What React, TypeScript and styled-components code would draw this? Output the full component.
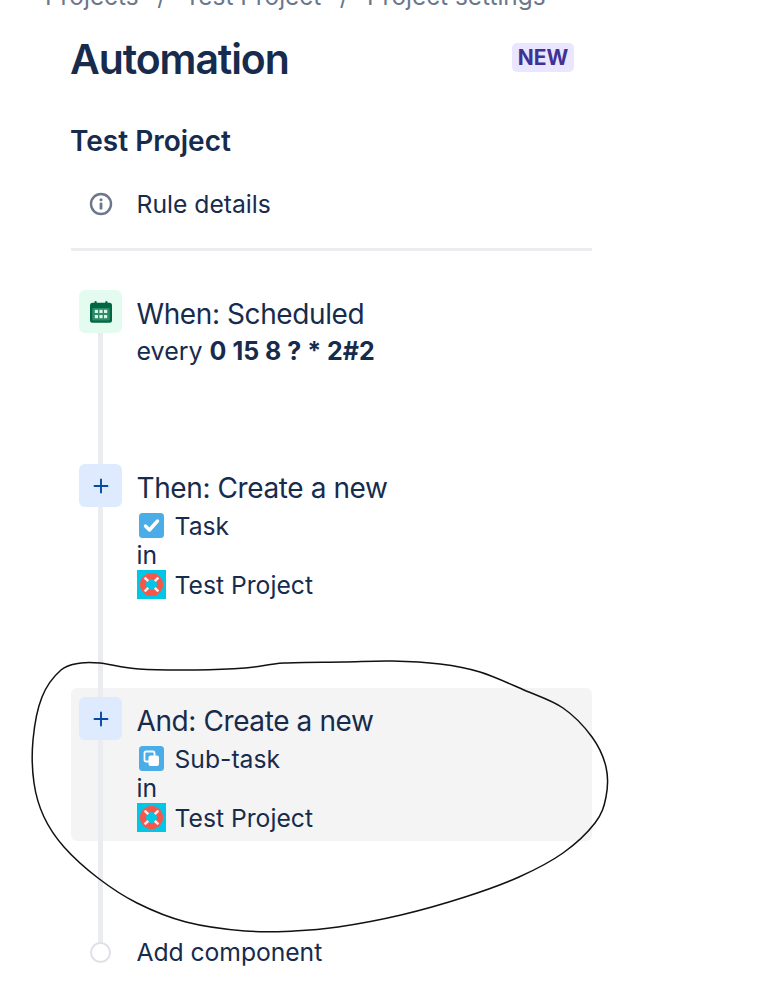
import React from "react";
import styled, { createGlobalStyle } from "styled-components";

const Global = createGlobalStyle`
  html, body { margin: 0; padding: 0; background: #fff; }
  body { font-family: Inter, "Liberation Sans", sans-serif; color: #172b4d; overflow: hidden; }
`;

const Page = styled.div`
  position: relative;
  width: 765px;
  height: 999px;
  overflow: hidden;
`;

const Breadcrumbs = styled.div`
  display: flex;
  gap: 18.5px;
  height: 8px;
  margin-left: 45px;
  font-size: 24.4px;
  line-height: 20px;
  white-space: nowrap;
  color: #6b778c;
  & > span { margin-top: -14px; display: block; }
`;

const Sidebar = styled.div`
  position: relative;
  width: 521px;
  margin-left: 71px;
`;

const Header = styled.div`
  display: flex;
  align-items: flex-start;
  justify-content: space-between;
  padding-top: 28px;
  padding-right: 18px;
`;

const Title = styled.h1`
  margin: 0 0 0 -1px;
  font-size: 41px;
  line-height: 46px;
  font-weight: 600;
  letter-spacing: -1.1px;
`;

const NewTag = styled.span`
  margin-top: 7px;
  width: 62px;
  height: 29px;
  border-radius: 5px;
  background: #eae6ff;
  color: #403294;
  font-size: 21px;
  line-height: 29px;
  font-weight: 700;
  text-align: center;
`;

const ProjectName = styled.h2`
  margin: 41px 0 0 -1px;
  font-size: 28px;
  line-height: 36px;
  font-weight: 600;
`;

const DetailsRow = styled.div`
  display: flex;
  align-items: center;
  gap: 23.5px;
  height: 30px;
  margin-top: 30px;
  padding-left: 18px;
  font-size: 24.7px;
`;

const Divider = styled.div`
  height: 3px;
  margin-top: 29px;
  background: #ebecf0;
`;

const Flow = styled.div`
  position: relative;
  margin-top: 39px;
`;

const Rail = styled.div`
  position: absolute;
  left: 27px;
  top: 20px;
  bottom: 12px;
  width: 5px;
  background: #ebecf0;
  z-index: 1;
`;

const Step = styled.div<{ $height: number }>`
  display: flex;
  gap: 14.5px;
  height: ${(p) => p.$height}px;
  padding-left: 8px;
  box-sizing: border-box;
`;

const ActiveStep = styled(Step)`
  padding-top: 9px;
  border-radius: 6px;
  background: #f4f4f4;
`;

const Badge = styled.div<{ $bg: string }>`
  position: relative;
  z-index: 2;
  display: flex;
  align-items: center;
  justify-content: center;
  flex: none;
  width: 43px;
  height: 43px;
  border-radius: 6px;
  background: ${(p) => p.$bg};
`;

const Body = styled.div`
  display: flex;
  flex-direction: column;
  padding-top: 6px;
`;

const StepTitle = styled.div`
  font-size: 28px;
  line-height: 36px;
  letter-spacing: -0.4px;
  white-space: nowrap;
`;

const StepLine = styled.div`
  display: flex;
  align-items: center;
  gap: 10.5px;
  height: 29.5px;
  font-size: 24.7px;
  white-space: nowrap;
`;

const Details = styled.div`
  margin-top: 5px;
`;

const Schedule = styled.div`
  margin-top: 3px;
  height: 32px;
  line-height: 32px;
  font-size: 25px;
  white-space: pre;
  b { font-weight: 700; }
`;

const AddRow = styled.div`
  display: flex;
  align-items: center;
  gap: 25.5px;
  height: 32px;
  margin-top: 95px;
  padding-left: 19px;
  font-size: 24.7px;
  letter-spacing: -0.05px;
`;

const Dot = styled.span`
  position: relative;
  z-index: 2;
  flex: none;
  box-sizing: border-box;
  width: 21px;
  height: 21px;
  border-radius: 50%;
  border: 2px solid #dfe1e6;
  background: #fff;
`;

const Scribble = styled.svg`
  position: absolute;
  left: 0;
  top: 0;
  z-index: 3;
  pointer-events: none;
`;

function InfoIcon() {
  return (
    <svg width="24" height="24" viewBox="0 0 24 24">
      <circle cx="12" cy="12" r="10" fill="none" stroke="#6b778c" strokeWidth="2.4" />
      <circle cx="12" cy="7.8" r="1.5" fill="#6b778c" />
      <rect x="10.6" y="10.6" width="2.8" height="7" rx="1.2" fill="#6b778c" />
    </svg>
  );
}

function CalendarIcon() {
  return (
    <svg width="24" height="24" viewBox="0 0 24 24">
      <rect x="5.5" y="1" width="2.2" height="5" rx="1.1" fill="#006644" />
      <rect x="16.3" y="1" width="2.2" height="5" rx="1.1" fill="#006644" />
      <rect x="1" y="2.8" width="22" height="20" rx="2.5" fill="#006644" />
      <rect x="3.2" y="8" width="17.6" height="12.6" rx="0.8" fill="#2f8a68" />
      {[5.8, 10.4, 15].map((x) =>
        [9.8, 15].map((y) => (
          <rect key={`${x}-${y}`} x={x} y={y} width="3.2" height="3.2" fill="#d6f5e6" />
        ))
      )}
    </svg>
  );
}

function PlusIcon() {
  return (
    <svg width="16" height="16" viewBox="0 0 16 16">
      <path d="M8 1.5v13M1.5 8h13" stroke="#0747a6" strokeWidth="1.9" strokeLinecap="round" />
    </svg>
  );
}

function TaskIcon() {
  return (
    <svg width="25" height="25" viewBox="0 0 25 25" style={{ marginLeft: 2.5 }}>
      <rect width="25" height="25" rx="3.5" fill="#4bade8" />
      <path d="M6.5 13l4 4 8-9" fill="none" stroke="#fff" strokeWidth="3.4" strokeLinecap="round" strokeLinejoin="round" />
    </svg>
  );
}

function SubtaskIcon() {
  return (
    <svg width="25" height="25" viewBox="0 0 25 25" style={{ marginLeft: 2.5 }}>
      <rect width="25" height="25" rx="3.5" fill="#4bade8" />
      <rect x="5.5" y="5.5" width="10" height="10" rx="1.5" fill="none" stroke="#fff" strokeWidth="1.8" />
      <rect x="9.5" y="9.5" width="10.5" height="10.5" rx="2" fill="#fff" />
    </svg>
  );
}

function ProjectIcon() {
  return (
    <svg width="29" height="29" viewBox="0 0 29 29" style={{ marginLeft: 0.5, marginRight: -2 }}>
      <rect width="29" height="29" fill="#00c7e6" />
      <circle cx="14.5" cy="14.5" r="8.5" fill="none" stroke="#f9564b" strokeWidth="6" />
      <path d="M7.6 7.6l3.6 3.6M21.4 7.6l-3.6 3.6M7.6 21.4l3.6-3.6M21.4 21.4l-3.6-3.6" stroke="#ffe9e4" strokeWidth="2.6" />
    </svg>
  );
}

// hand drawn ring round the third step
const ring = [
  [81, 663], [100, 663], [139, 669], [196, 670], [245, 668], [284, 663], [343, 662], [392, 661],
  [440, 664], [480, 672], [524, 690], [563, 708], [592, 737], [606, 767], [606, 797], [595, 823],
  [563, 853], [519, 877], [465, 897], [401, 915], [338, 927], [294, 931], [245, 931], [186, 922],
  [137, 903], [98, 878], [64, 847], [44, 817], [34, 783], [33, 740], [42, 697], [61, 670],
];

function ringPath() {
  const n = ring.length;
  let d = `M${ring[0][0]} ${ring[0][1]}`;
  for (let i = 0; i < n; i++) {
    const p0 = ring[(i - 1 + n) % n];
    const p1 = ring[i];
    const p2 = ring[(i + 1) % n];
    const p3 = ring[(i + 2) % n];
    const c1x = p1[0] + (p2[0] - p0[0]) / 6;
    const c1y = p1[1] + (p2[1] - p0[1]) / 6;
    const c2x = p2[0] - (p3[0] - p1[0]) / 6;
    const c2y = p2[1] - (p3[1] - p1[1]) / 6;
    d += `C${c1x} ${c1y} ${c2x} ${c2y} ${p2[0]} ${p2[1]}`;
  }
  return d;
}

export default function App() {
  return (
    <Page>
      <Global />
      <Breadcrumbs>
        <span>Projects</span>
        <span>/</span>
        <span>Test Project</span>
        <span>/</span>
        <span>Project settings</span>
      </Breadcrumbs>
      <Sidebar>
        <Header>
          <Title>Automation</Title>
          <NewTag>NEW</NewTag>
        </Header>
        <ProjectName>Test Project</ProjectName>
        <DetailsRow>
          <InfoIcon />
          Rule details
        </DetailsRow>
        <Divider />
        <Flow>
          <Rail />
          <Step $height={174}>
            <Badge $bg="#e3fcef">
              <CalendarIcon />
            </Badge>
            <Body>
              <StepTitle>When: Scheduled</StepTitle>
              <Schedule>
                every <b>0 15 8 ? * 2#2</b>
              </Schedule>
            </Body>
          </Step>
          <Step $height={224}>
            <Badge $bg="#deebff">
              <PlusIcon />
            </Badge>
            <Body>
              <StepTitle>Then: Create a new</StepTitle>
              <Details>
                <StepLine>
                  <TaskIcon />
                  Task
                </StepLine>
                <StepLine>in</StepLine>
                <StepLine>
                  <ProjectIcon />
                  Test Project
                </StepLine>
              </Details>
            </Body>
          </Step>
          <ActiveStep $height={153}>
            <Badge $bg="#deebff">
              <PlusIcon />
            </Badge>
            <Body>
              <StepTitle>And: Create a new</StepTitle>
              <Details>
                <StepLine>
                  <SubtaskIcon />
                  Sub-task
                </StepLine>
                <StepLine>in</StepLine>
                <StepLine>
                  <ProjectIcon />
                  Test Project
                </StepLine>
              </Details>
            </Body>
          </ActiveStep>
          <AddRow>
            <Dot />
            Add component
          </AddRow>
        </Flow>
      </Sidebar>
      <Scribble width="765" height="999" viewBox="0 0 765 999">
        <path d={ringPath()} fill="none" stroke="#111" strokeWidth="1.5" />
      </Scribble>
    </Page>
  );
}
